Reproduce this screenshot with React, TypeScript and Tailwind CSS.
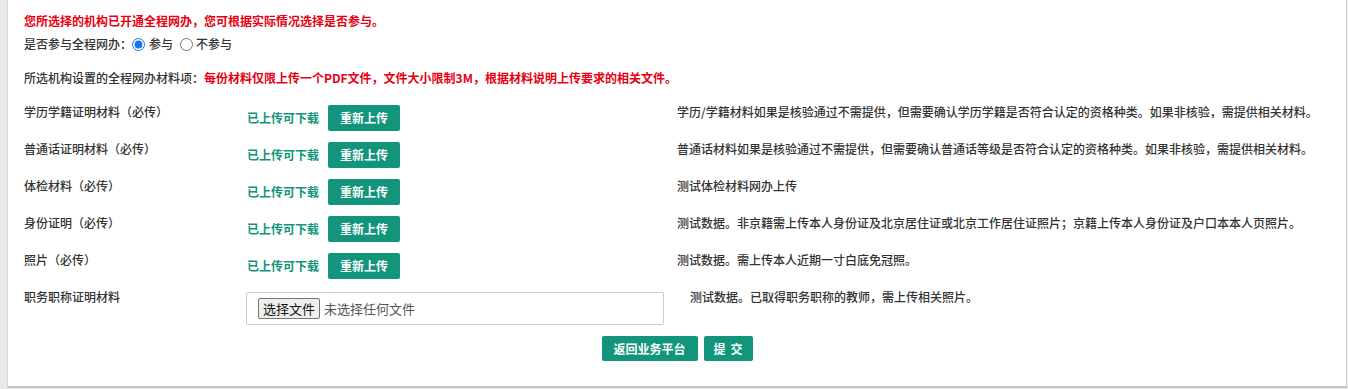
import React from "react";

const rows = [
  { label: "学历学籍证明材料（必传）", desc: "学历/学籍材料如果是核验通过不需提供，但需要确认学历学籍是否符合认定的资格种类。如果非核验，需提供相关材料。" },
  { label: "普通话证明材料（必传）", desc: "普通话材料如果是核验通过不需提供，但需要确认普通话等级是否符合认定的资格种类。如果非核验，需提供相关材料。" },
  { label: "体检材料（必传）", desc: "测试体检材料网办上传" },
  { label: "身份证明（必传）", desc: "测试数据。非京籍需上传本人身份证及北京居住证或北京工作居住证照片；京籍上传本人身份证及户口本本人页照片。" },
  { label: "照片（必传）", desc: "测试数据。需上传本人近期一寸白底免冠照。" },
];

export default function App() {
  return (
    <div className="w-[1348px] h-[389px] bg-[#e9e9e9] pl-[7px] pr-[1px] pb-[1px] font-['Noto_Sans_CJK_SC','Microsoft_YaHei',sans-serif] text-[12px] leading-[18px] text-[#333] font-medium">
      <div className="h-full bg-white border-l border-l-[#d6d6d6] border-r border-r-[#cfcfcf] border-b-2 border-b-[#c4c4c4] pl-[16px] pt-[12px] flex flex-col">
        <div className="text-[#e60012] font-bold">您所选择的机构已开通全程网办，您可根据实际情况选择是否参与。</div>
        <div className="mt-[5px] h-[18px] flex items-center">
          <span>是否参与全程网办：</span>
          <label className="flex items-center">
            <input type="radio" name="join" defaultChecked className="w-[13px] h-[13px] m-0 accent-[#1a73e8]" />
            <span className="ml-[4px]">参与</span>
          </label>
          <label className="flex items-center ml-[7px]">
            <input type="radio" name="join" className="w-[13px] h-[13px] m-0" />
            <span className="ml-[3px]">不参与</span>
          </label>
        </div>
        <div className="mt-[16px] flex">
          <span>所选机构设置的全程网办材料项：</span>
          <span className="text-[#e60012] font-bold">每份材料仅限上传一个PDF文件，文件大小限制3M，根据材料说明上传要求的相关文件。</span>
        </div>
        <div className="mt-[16px] flex flex-col">
          {rows.map((r) => (
            <div key={r.label} className="h-[37px] flex items-start">
              <div className="w-[223px] shrink-0">{r.label}</div>
              <div className="w-[430px] shrink-0 mt-[2px] h-[26px] flex items-center">
                <span className="text-[#12957b] font-bold">已上传可下载</span>
                <button className="ml-[9px] w-[72px] h-[26px] bg-[#12957b] text-white font-bold rounded-[2px]">重新上传</button>
              </div>
              <div className="whitespace-nowrap">{r.desc}</div>
            </div>
          ))}
          <div className="flex items-start">
            <div className="w-[222px] shrink-0">职务职称证明材料</div>
            <div className="w-[418px] h-[33px] shrink-0 mt-[4px] border border-[#cccccc] rounded-[2px] flex items-center pl-[11px] font-normal">
              <span className="h-[21px] px-[4px] border border-[#767676] rounded-[2px] bg-[#efefef] text-[#111] text-[13px] leading-[19px]">选择文件</span>
              <span className="ml-[4px] text-[#555] text-[13px]">未选择任何文件</span>
            </div>
            <div className="ml-[26px] whitespace-nowrap">测试数据。已取得职务职称的教师，需上传相关照片。</div>
          </div>
        </div>
        <div className="mt-[11px] flex justify-center gap-[6px] pr-[16px]">
          <button className="w-[96px] h-[25px] bg-[#12957b] text-white font-bold rounded-[2px]">返回业务平台</button>
          <button className="w-[49px] h-[25px] bg-[#12957b] text-white font-bold rounded-[2px] tracking-[5px] pl-[5px]">提交</button>
        </div>
      </div>
    </div>
  );
}
